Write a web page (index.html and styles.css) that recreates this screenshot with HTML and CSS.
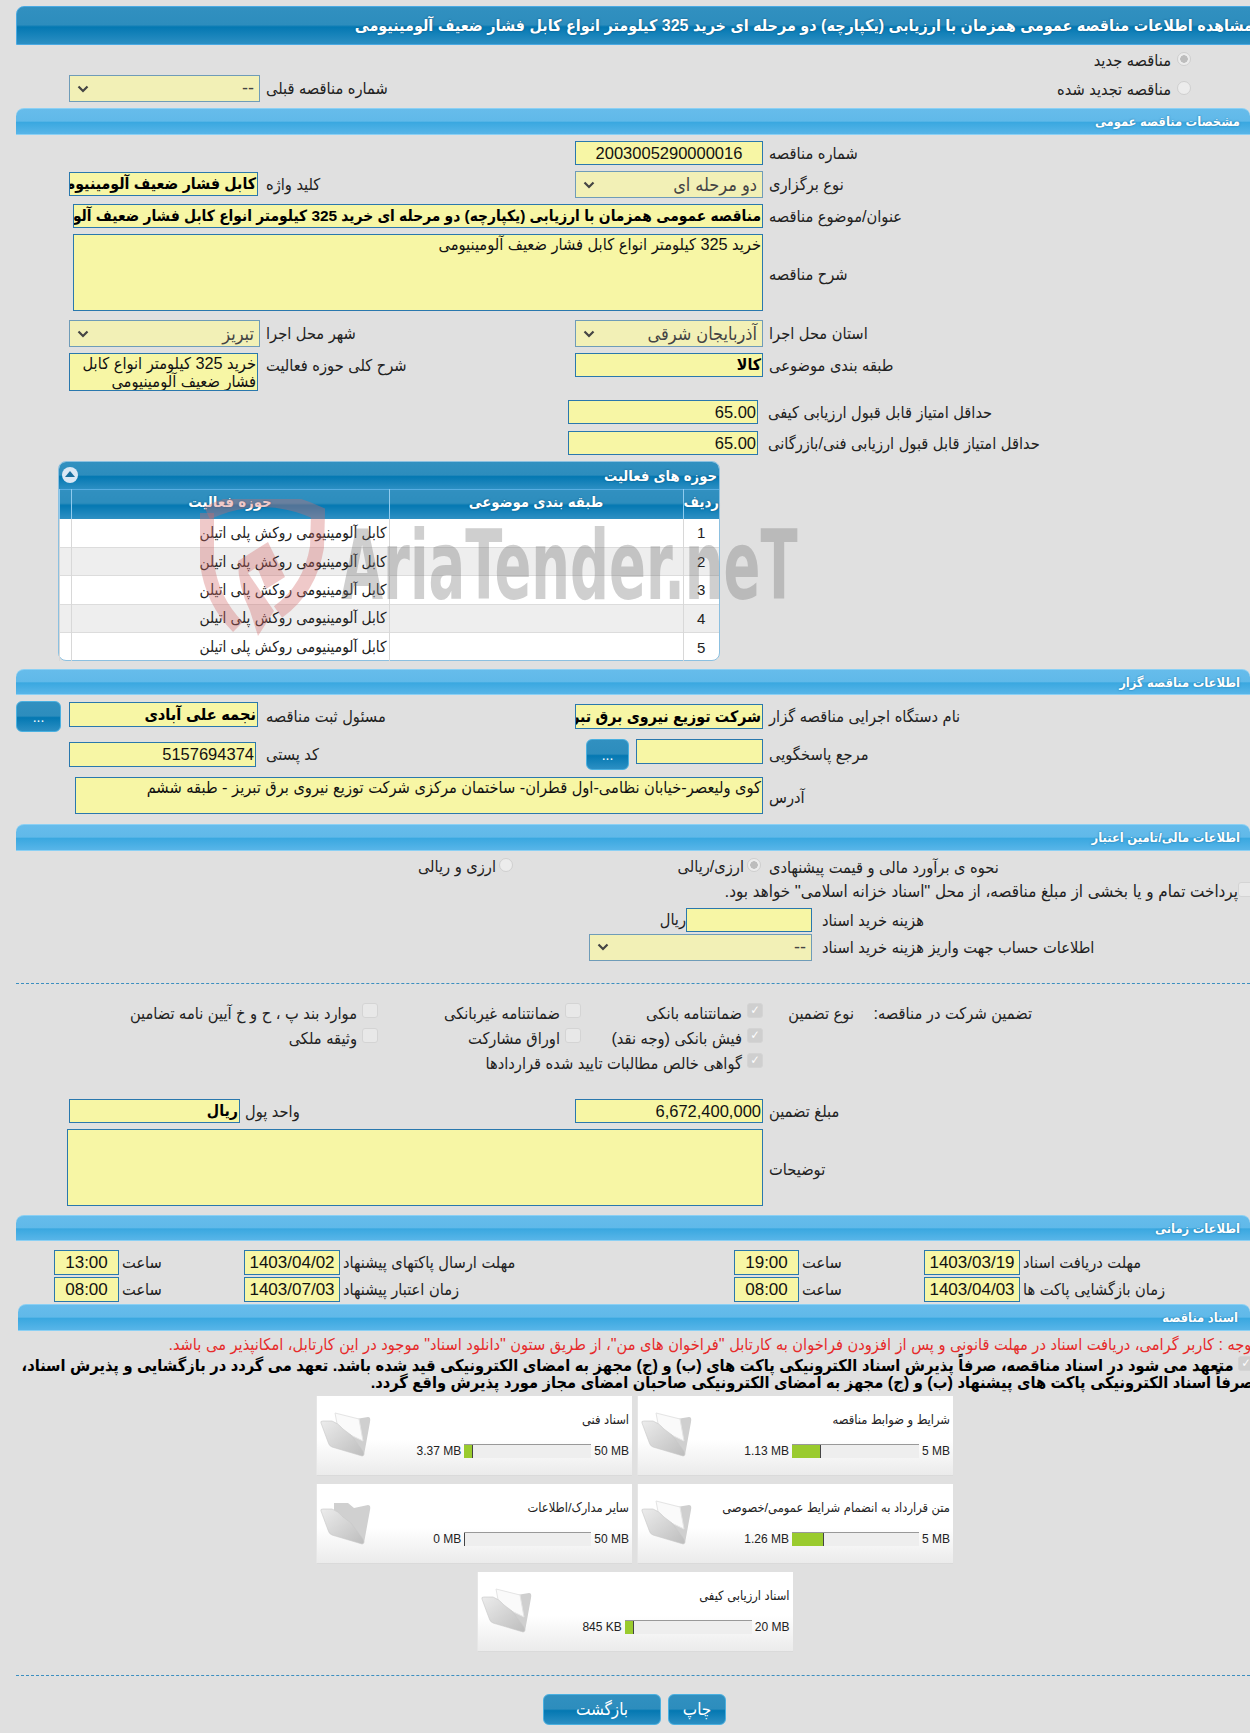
FILE: index.html
```html
<!DOCTYPE html>
<html lang="fa" dir="rtl">
<head>
    <meta charset="UTF-8">
    <title>مشاهده اطلاعات مناقصه</title>
    <link rel="stylesheet" href="styles.css">
</head>
<body>
    <svg class="defs" width="0" height="0">
        <defs>
            <linearGradient id="flap" x1="0" y1="0" x2="1" y2="1">
                <stop offset="0" stop-color="#ececec"/>
                <stop offset="1" stop-color="#bdbdbd"/>
            </linearGradient>
            <symbol id="chevron" viewBox="0 0 12 8">
                <path d="M1.5 1.5 L6 6 L10.5 1.5" fill="none" stroke="#444" stroke-width="2.2"/>
            </symbol>
            <symbol id="folder" viewBox="0 0 56 52">
                <path d="M38 10 L50 8 Q53 8 52 13 L46 46 L30 30 Z" fill="#cfcfcf"/>
                <path d="M17 4 L41 10 L45 32 L20 20 Z" fill="#fafafa" stroke="#e4e4e4"/>
                <path d="M3 14 Q2 12 5 12 L14 12 Q20 14 25 20 L33 26 L45 42 Q47 47 44 47 L14 38 Q11 37 10 33 Z" fill="url(#flap)" stroke="#c8c8c8" stroke-width=".6"/>
            </symbol>
            <symbol id="folder-empty" viewBox="0 0 56 52">
                <path d="M16 6 L30 6 L36 11 L50 8 Q53 8 52 13 L46 46 L30 30 L16 18 Z" fill="#d0d0d0"/>
                <path d="M3 14 Q2 12 5 12 L14 12 Q20 14 25 20 L33 26 L45 42 Q47 47 44 47 L14 38 Q11 37 10 33 Z" fill="url(#flap)" stroke="#c8c8c8" stroke-width=".6"/>
            </symbol>
        </defs>
    </svg>

    <!-- Page title -->
    <h1 class="page-title">مشاهده اطلاعات مناقصه عمومی همزمان با ارزیابی (یکپارچه) دو مرحله ای خرید 325 کیلومتر انواع کابل فشار ضعیف آلومینیومی</h1>

    <div class="form-grid top-grid">
        <div class="radio-line"><span class="radio checked"></span><span>مناقصه جدید</span></div>
        <div class="radio-line second-radio"><span class="radio"></span><span>مناقصه تجدید شده</span></div>
        <div class="lbl col-left-label prev-label">شماره مناقصه قبلی</div>
        <div class="select col-left-field prev-select"><span>--</span><svg class="chevron"><use href="#chevron"/></svg></div>
    </div>

    <!-- General -->
    <h2 class="section-bar">مشخصات مناقصه عمومی</h2>
    <div class="form-grid general-grid">
        <div class="lbl">شماره مناقصه</div>
        <div class="input number-input">2003005290000016</div>
        <div></div><div></div><div></div>

        <div class="lbl select-lbl">نوع برگزاری</div>
        <div class="select"><span>دو مرحله ای</span><svg class="chevron"><use href="#chevron"/></svg></div>
        <div class="lbl keyword-lbl">کلید واژه</div>
        <div class="input strong keyword-input">کابل فشار ضعیف آلومینیومی</div>
        <div></div>

        <div class="lbl">عنوان/موضوع مناقصه</div>
        <div class="input strong title-input">مناقصه عمومی همزمان با ارزیابی (یکپارچه) دو مرحله ای خرید 325 کیلومتر انواع کابل فشار ضعیف آلومینیومی</div>

        <div class="lbl middle">شرح مناقصه</div>
        <div class="input area title-input desc-area">خرید 325 کیلومتر انواع کابل فشار ضعیف آلومینیومی</div>

        <div class="lbl select-lbl">استان محل اجرا</div>
        <div class="select"><span>آذربایجان شرقی</span><svg class="chevron"><use href="#chevron"/></svg></div>
        <div class="lbl select-lbl">شهر محل اجرا</div>
        <div class="select col-left-field"><span>تبریز</span><svg class="chevron"><use href="#chevron"/></svg></div>
        <div></div>

        <div class="lbl">طبقه بندی موضوعی</div>
        <div class="input strong">کالا</div>
        <div class="lbl">شرح کلی حوزه فعالیت</div>
        <div class="input area activity-area">خرید 325 کیلومتر انواع کابل فشار ضعیف آلومینیومی</div>
        <div></div>

        <div class="lbl score-lbl">حداقل امتیاز قابل قبول ارزیابی کیفی</div>
        <div class="input score-input">65.00</div>

        <div class="lbl score-lbl">حداقل امتیاز قابل قبول ارزیابی فنی/بازرگانی</div>
        <div class="input score-input">65.00</div>
    </div>

    <!-- Activity table -->
    <section class="panel">
        <div class="panel-head">
            <span>حوزه های فعالیت</span>
            <span class="panel-toggle"></span>
        </div>
        <table class="panel-table">
            <thead>
                <tr><th class="col-row">ردیف</th><th class="col-cat">طبقه بندی موضوعی</th><th class="col-act">حوزه فعالیت</th><th></th></tr>
            </thead>
            <tbody>
                <tr><td class="num">1</td><td></td><td>کابل آلومینیومی روکش پلی اتیلن</td><td></td></tr>
                <tr><td class="num">2</td><td></td><td>کابل آلومینیومی روکش پلی اتیلن</td><td></td></tr>
                <tr><td class="num">3</td><td></td><td>کابل آلومینیومی روکش پلی اتیلن</td><td></td></tr>
                <tr><td class="num">4</td><td></td><td>کابل آلومینیومی روکش پلی اتیلن</td><td></td></tr>
                <tr><td class="num">5</td><td></td><td>کابل آلومینیومی روکش پلی اتیلن</td><td></td></tr>
            </tbody>
        </table>
        <div class="watermark">
            <svg class="watermark-shield" viewBox="0 0 125 137">
                <path d="M7 14 Q62 -12 118 14 L117 48 Q110 90 78 113" fill="none" stroke="#d46a6a" stroke-opacity=".36" stroke-width="14"/>
                <path d="M7 14 L7 64 Q12 102 38 128" fill="none" stroke="#d46a6a" stroke-opacity=".36" stroke-width="14"/>
                <path d="M38 62 L68 43 L85 78 L66 90 L57 68 L48 74 L74 112 L58 137 L50 112 Q38 88 38 62 Z" fill="#d46a6a" fill-opacity=".36"/>
            </svg>
            <span class="watermark-text">AriaTender.neT</span>
        </div>
    </section>

    <!-- Tender organizer -->
    <h2 class="section-bar organizer-bar">اطلاعات مناقصه گزار</h2>
    <div class="form-grid organizer-grid">
        <div class="lbl pushed">نام دستگاه اجرایی مناقصه گزار</div>
        <div class="input strong pushed">شرکت توزیع نیروی برق تبریز</div>
        <div class="lbl pushed">مسئول ثبت مناقصه</div>
        <div class="input strong pushed keyword-input person-input">نجمه علی آبادی</div>
        <button class="btn dots-btn" type="button">...</button>

        <div class="lbl pushed">مرجع پاسخگویی</div>
        <div class="ref-cell">
            <div class="input ref-input"></div>
            <button class="btn dots-btn" type="button">...</button>
        </div>
        <div class="lbl pushed">کد پستی</div>
        <div class="input number-left pushed postal-input">5157694374</div>
        <div></div>

        <div class="lbl address-lbl">آدرس</div>
        <div class="input area address-area">کوی ولیعصر-خیابان نظامی-اول قطران- ساختمان مرکزی شرکت توزیع نیروی برق تبریز - طبقه ششم</div>
    </div>

    <!-- Finance -->
    <h2 class="section-bar">اطلاعات مالی/تامین اعتبار</h2>
    <div class="finance-line estimate-line">
        <div class="lbl">نحوه ی برآورد مالی و قیمت پیشنهادی</div>
        <div class="options">
            <div class="option"><span class="radio checked"></span><span>ارزی/ریالی</span></div>
            <div class="option"><span class="radio"></span><span>ارزی و ریالی</span></div>
        </div>
    </div>
    <div class="treasury-line"><span class="check"></span><span>پرداخت تمام و یا بخشی از مبلغ مناقصه، از محل "اسناد خزانه اسلامی" خواهد بود.</span></div>
    <div class="cost-line cost-first">
        <div class="lbl cost-lbl">هزینه خرید اسناد</div>
        <div class="input cost-input"></div>
        <span class="cost-unit">ریال</span>
    </div>
    <div class="cost-line cost-second">
        <div class="lbl cost-lbl">اطلاعات حساب جهت واریز هزینه خرید اسناد</div>
        <div class="select account-select"><span>--</span><svg class="chevron"><use href="#chevron"/></svg></div>
    </div>

    <hr class="dashed first-dashed">

    <div class="guarantee-grid">
        <div>تضمین شرکت در مناقصه:</div>
        <div>نوع تضمین</div>
        <label class="check-item"><span class="check on">✓</span>ضمانتنامه بانکی</label>
        <label class="check-item"><span class="check"></span>ضمانتنامه غیربانکی</label>
        <label class="check-item"><span class="check"></span>موارد بند پ ، ح و خ آیین نامه تضامین</label>
        <div></div>
        <div></div>
        <label class="check-item"><span class="check on">✓</span>فیش بانکی (وجه نقد)</label>
        <label class="check-item"><span class="check"></span>اوراق مشارکت</label>
        <label class="check-item"><span class="check"></span>وثیقه ملکی</label>
        <div></div>
        <div></div>
        <label class="check-item wide-item"><span class="check on">✓</span>گواهی خالص مطالبات تایید شده قراردادها</label>
    </div>

    <div class="form-grid amount-grid">
        <div class="lbl">مبلغ تضمین</div>
        <div class="input number-left">6,672,400,000</div>
        <div class="lbl unit-lbl">واحد پول</div>
        <div class="input strong unit-input">ریال</div>
        <div></div>

        <div class="lbl middle">توضیحات</div>
        <div class="input area notes-area"></div>
    </div>

    <!-- Dates -->
    <h2 class="section-bar">اطلاعات زمانی</h2>
    <div class="dates-grid">
        <div class="lbl">مهلت دریافت اسناد</div>
        <div class="input date">1403/03/19</div>
        <div class="lbl">ساعت</div>
        <div class="input date">19:00</div>
        <div class="lbl">مهلت ارسال پاکتهای پیشنهاد</div>
        <div class="input date">1403/04/02</div>
        <div class="lbl">ساعت</div>
        <div class="input date">13:00</div>
        <div></div>

        <div class="lbl">زمان بازگشایی پاکت ها</div>
        <div class="input date">1403/04/03</div>
        <div class="lbl">ساعت</div>
        <div class="input date">08:00</div>
        <div class="lbl">زمان اعتبار پیشنهاد</div>
        <div class="input date">1403/07/03</div>
        <div class="lbl">ساعت</div>
        <div class="input date">08:00</div>
        <div></div>
    </div>

    <!-- Documents -->
    <h2 class="section-bar docs-bar">اسناد مناقصه</h2>
    <p class="notice-red">توجه : کاربر گرامی، دریافت اسناد در مهلت قانونی و پس از افزودن فراخوان به کارتابل "فراخوان های من"، از طریق ستون "دانلود اسناد" موجود در این کارتابل، امکانپذیر می باشد.</p>
    <p class="notice-bold"><span class="check on">✓</span> متعهد می شود در اسناد مناقصه، صرفاً پذیرش اسناد الکترونیکی پاکت های (ب) و (ج) مجهز به امضای الکترونیکی قید شده باشد. تعهد می گردد در بازگشایی و پذیرش اسناد،<br>صرفاً اسناد الکترونیکی پاکت های پیشنهاد (ب) و (ج) مجهز به امضای الکترونیکی صاحبان امضای مجاز مورد پذیرش واقع گردد.</p>

    <div class="doc-cards">
        <div class="doc-card">
            <div class="doc-info">
                <div class="doc-title">شرایط و ضوابط مناقصه</div>
                <div class="doc-usage"><span dir="ltr">5 MB</span><div class="bar"><div class="bar-fill" style="width:23%"></div></div><span dir="ltr">1.13 MB</span></div>
            </div>
            <svg class="folder"><use href="#folder"/></svg>
        </div>
        <div class="doc-card">
            <div class="doc-info">
                <div class="doc-title">اسناد فنی</div>
                <div class="doc-usage"><span dir="ltr">50 MB</span><div class="bar"><div class="bar-fill" style="width:7%"></div></div><span dir="ltr">3.37 MB</span></div>
            </div>
            <svg class="folder"><use href="#folder"/></svg>
        </div>
        <div class="doc-card">
            <div class="doc-info">
                <div class="doc-title">متن قرارداد به انضمام شرایط عمومی/خصوصی</div>
                <div class="doc-usage"><span dir="ltr">5 MB</span><div class="bar"><div class="bar-fill" style="width:25%"></div></div><span dir="ltr">1.26 MB</span></div>
            </div>
            <svg class="folder"><use href="#folder"/></svg>
        </div>
        <div class="doc-card">
            <div class="doc-info">
                <div class="doc-title">سایر مدارک/اطلاعات</div>
                <div class="doc-usage"><span dir="ltr">50 MB</span><div class="bar"><div class="bar-fill" style="width:0"></div></div><span dir="ltr">0 MB</span></div>
            </div>
            <svg class="folder"><use href="#folder-empty"/></svg>
        </div>
        <div class="doc-card">
            <div class="doc-info">
                <div class="doc-title">اسناد ارزیابی کیفی</div>
                <div class="doc-usage"><span dir="ltr">20 MB</span><div class="bar"><div class="bar-fill" style="width:7%"></div></div><span dir="ltr">845 KB</span></div>
            </div>
            <svg class="folder"><use href="#folder"/></svg>
        </div>
    </div>

    <hr class="dashed last-dashed">

    <div class="actions">
        <button class="btn" type="button">چاپ</button>
        <button class="btn back-btn" type="button">بازگشت</button>
    </div>
</body>
</html>
```

FILE: styles.css
```css
/* General */
html {
    overflow-x: hidden;
}

body {
    width: 1250px;
    margin: 0;
    padding-bottom: 8px;
    overflow-x: hidden;
    background-color: #e0e0e0;
    color: #222;
    font-family: "Liberation Sans", "DejaVu Sans Condensed", "DejaVu Sans", sans-serif;
    font-size: 16.3px;
    direction: rtl;
}

.defs {
    position: absolute;
}

/* Bars */
.page-title {
    box-sizing: border-box;
    height: 39px;
    margin: 6px -10px 0 16px;
    padding: 0 6px 0 0;
    border: 1px solid #4aa9e2;
    border-radius: 8px 8px 0 0;
    background: linear-gradient(#3190c0, #2d8dbd 48%, #0478b2 54%, #2c8fc3 100%);
    color: #fff;
    font-size: 16px;
    font-weight: bold;
    line-height: 37px;
    white-space: nowrap;
    text-shadow: 0 0 2px #0a4f78;
}

.section-bar {
    box-sizing: border-box;
    height: 26.5px;
    margin: 0 0 0 16px;
    padding-right: 10px;
    border-top: 1px solid #8bd0f4;
    border-bottom: 1px solid #8bd0f4;
    border-radius: 8px 8px 0 0;
    background: linear-gradient(#66bceb, #60b9e9 48%, #3aa8e0 54%, #58b5e8 100%);
    color: #fff;
    font-size: 12.8px;
    font-weight: bold;
    line-height: 25px;
    text-shadow: 0 0 2px #1c6f9f;
}

.docs-bar {
    margin-left: 18px;
    padding-right: 12px;
}

.organizer-bar {
    margin-top: 8px;
}

/* Form grid: columns run from the right */
.form-grid {
    display: grid;
    grid-template-columns: 487px 188px 315px 191px 69px;
    align-items: start;
}

.top-grid {
    grid-template-rows: 30px 33px;
}

.general-grid {
    margin-top: 6.5px;
    grid-template-rows: 30px 33px 30px 86px 33px 47px 30.5px 30px;
}

.organizer-grid {
    margin-top: 6px;
    grid-template-rows: 38px 38px 47px;
}

.amount-grid {
    margin-top: 23px;
    grid-template-rows: 30px 86px;
}

.lbl {
    padding-left: 6px;
    text-align: left;
    line-height: 24px;
    white-space: nowrap;
}

.select-lbl {
    line-height: 27px;
}

.middle {
    margin-top: 28px;
}

.address-lbl {
    margin-top: 8px;
}

.pushed {
    margin-top: 3px;
    line-height: 25px;
}

.input {
    box-sizing: border-box;
    height: 24px;
    overflow: hidden;
    border: 1px solid #2a78ad;
    background-color: #f7f6a5;
    color: #111;
    font-size: 16.3px;
    line-height: 22px;
    padding: 0 1px;
    white-space: nowrap;
}

.input.pushed {
    height: 25px;
    line-height: 23px;
}

.strong {
    font-weight: bold;
    font-size: 15.8px;
    color: #000;
}

.title-input.strong {
    font-size: 15.4px;
}

.person-input {
    font-size: 16.3px;
}

.number-input {
    font-size: 16.5px;
    text-align: center;
}

.number-left {
    font-size: 16.5px;
}

.select {
    box-sizing: border-box;
    display: flex;
    align-items: center;
    justify-content: space-between;
    height: 27px;
    padding: 0 5px 0 7px;
    border: 1px solid #6f9cb8;
    background-color: #f2f0b6;
    color: #444;
    font-size: 18px;
}

.chevron {
    width: 12px;
    height: 8px;
}

.col-left-field {
    grid-column: 4;
}

.col-left-label {
    grid-column: 3;
    grid-row: 2;
}

.prev-label {
    line-height: 27px;
}

.prev-select {
    grid-row: 2;
}

.radio-line {
    display: flex;
    align-items: center;
    gap: 6px;
    grid-column: 1;
    padding-top: 6px;
    padding-right: 59px;
}

.second-radio {
    grid-row: 2;
    padding-top: 5px;
}

.radio {
    box-sizing: border-box;
    display: inline-block;
    flex: none;
    width: 14px;
    height: 14px;
    margin-bottom: 3px;
    border: 1px solid #cfcfcf;
    border-radius: 50%;
    background-color: #ececec;
}

.radio.checked {
    background: radial-gradient(circle, #bdbdbd 0 3.5px, #ececec 4px);
}

.check {
    box-sizing: border-box;
    display: inline-block;
    flex: none;
    width: 16px;
    height: 15px;
    margin-bottom: 5px;
    border: 1px solid #d4d4d4;
    border-radius: 3px;
    background-color: #e8e8e8;
    color: #fff;
    font-size: 12px;
    font-weight: bold;
    line-height: 13px;
    text-align: center;
}

.check.on {
    background-color: #cfcfcf;
}

/* General section fields */
.keyword-input {
    justify-self: end;
    width: 189px;
    margin-top: 1px;
}

.keyword-lbl {
    margin-top: 1px;
}

.title-input {
    grid-column: 2 / 6;
    justify-self: start;
    width: 690px;
}

.desc-area {
    height: 77px;
}

.area {
    white-space: normal;
    line-height: 19px;
}

.activity-area {
    justify-self: end;
    width: 189px;
    height: 38px;
    line-height: 18px;
}

.score-input {
    grid-column: 2 / 6;
    justify-self: start;
    width: 190px;
    margin-right: 5px;
    font-size: 16.5px;
}

.score-lbl {
    padding-left: 5px;
}

/* Activity panel */
.panel {
    position: relative;
    box-sizing: border-box;
    width: 662px;
    height: 200px;
    margin-right: 530px;
    border: 1px solid #8cc0e0;
    border-radius: 8px;
    background-color: #fff;
}

.panel-head {
    display: flex;
    align-items: center;
    justify-content: space-between;
    height: 27px;
    padding: 0 2px 0 3px;
    border-radius: 7px 7px 0 0;
    background: linear-gradient(#3190c0, #2d8dbd 48%, #0478b2 54%, #2c8fc3 100%);
    color: #fff;
    font-size: 14.7px;
    font-weight: bold;
    text-shadow: 0 0 2px #0a4f78;
}

.panel-toggle {
    position: relative;
    width: 16px;
    height: 16px;
    border-radius: 50%;
    background-color: #dbe8f5;
}

.panel-toggle::after {
    content: "";
    position: absolute;
    top: 4px;
    left: 3px;
    border-right: 5px solid transparent;
    border-bottom: 6px solid #1a6f9f;
    border-left: 5px solid transparent;
}

.panel-table {
    width: 660px;
    table-layout: fixed;
    border-collapse: collapse;
}

.panel-table th {
    box-sizing: border-box;
    height: 30px;
    padding: 0 0 6px;
    border-top: 1px solid #58aee2;
    border-left: 1px solid #8fcbee;
    background: linear-gradient(#3190c0, #2d8dbd 48%, #0478b2 54%, #2c8fc3 100%);
    color: #fff;
    font-size: 14.8px;
    font-weight: bold;
    text-shadow: 0 0 2px #0a4f78;
}

.col-row {
    width: 36px;
}

.col-cat {
    width: 294px;
}

.col-act {
    width: 318px;
}

.panel-table td {
    box-sizing: border-box;
    height: 28.4px;
    padding: 0 2px;
    border-top: 1px solid #dcdcdc;
    border-left: 1px solid #d8d8d8;
    font-size: 15.3px;
    white-space: nowrap;
}

.panel-table tbody tr:first-child td {
    border-top: none;
}

.panel-table tbody tr:nth-child(even) td {
    background-color: #eee;
}

.panel-table .num {
    text-align: center;
    font-size: 15px;
}

.watermark {
    position: absolute;
    top: 37px;
    left: 141px;
    width: 600px;
    height: 140px;
    direction: ltr;
    pointer-events: none;
}

.watermark-shield {
    position: absolute;
    left: 0;
    top: 0;
    width: 125px;
    height: 137px;
}

.watermark-text {
    position: absolute;
    left: 141px;
    top: 19px;
    color: rgba(110, 110, 110, 0.33);
    font-family: "DejaVu Sans Condensed", "DejaVu Sans", sans-serif;
    font-size: 96px;
    font-weight: bold;
    line-height: 96px;
    white-space: nowrap;
    transform: scaleX(0.63);
    transform-origin: left top;
}

/* Organizer section */
.dots-btn {
    justify-self: end;
    width: 45px;
    height: 31px;
}

.organizer-grid > .dots-btn {
    margin-left: 16px;
}

.ref-cell {
    display: flex;
    gap: 7px;
}

.ref-input {
    flex: none;
    width: 127px;
    height: 25px;
}

.ref-cell .dots-btn {
    flex: none;
    width: 43px;
}

.postal-input {
    justify-self: end;
    width: 187px;
}

.address-area {
    grid-column: 2 / 6;
    justify-self: start;
    width: 688px;
    height: 37px;
}

/* Finance section */
.finance-line {
    display: grid;
    grid-template-columns: 487px 1fr;
    align-items: center;
    height: 28px;
    margin-top: 2px;
}

.options {
    display: flex;
    padding-right: 2px;
}

.option {
    display: flex;
    align-items: center;
    gap: 3px;
    width: 248px;
    white-space: nowrap;
}

.treasury-line {
    display: flex;
    align-items: center;
    height: 22px;
    margin-right: -4px;
    font-size: 16.9px;
    white-space: nowrap;
}

.cost-line {
    display: flex;
    align-items: center;
}

.cost-first {
    margin-top: 5px;
}

.cost-second {
    margin-top: 2px;
}

.cost-lbl {
    box-sizing: border-box;
    width: 438px;
    flex: none;
    padding-left: 10px;
}

.cost-input {
    width: 126px;
    flex: none;
}

.account-select {
    width: 223px;
}

.dashed {
    height: 0;
    margin: 0 0 0 16px;
    border: 0;
    border-top: 1px dashed #3b8fc0;
}

.first-dashed {
    margin-top: 22px;
}

.last-dashed {
    margin-top: 23px;
}

/* Guarantee */
.guarantee-grid {
    display: grid;
    grid-template-columns: 178px 91px 182px 203px 1fr;
    grid-auto-rows: 25px;
    align-items: center;
    margin-top: 17px;
    padding-right: 218px;
    white-space: nowrap;
}

.check-item {
    display: flex;
    align-items: center;
    gap: 5px;
}

.wide-item {
    grid-column: 3 / 6;
}

.unit-lbl {
    margin-left: -15px;
    padding-left: 0;
}

.unit-input {
    justify-self: end;
    width: 171px;
}

.notes-area {
    grid-column: 2 / 6;
    justify-self: start;
    width: 696px;
    height: 77px;
}

/* Dates */
.dates-grid {
    display: grid;
    grid-template-columns: 230px 96px 125px 65px 394px 96px 125px 65px 54px;
    grid-template-rows: 27px 27px;
    align-items: start;
    margin-top: 9px;
}

.dates-grid .lbl {
    padding-left: 3px;
    line-height: 25px;
}

.date {
    height: 25px;
    font-size: 17px;
    line-height: 23px;
    text-align: center;
}

/* Documents */
.notice-red {
    margin: 2px -6px 0 0;
    color: #e62b2b;
    font-size: 16.3px;
    line-height: 22px;
    white-space: nowrap;
}

.notice-bold {
    margin: 1px -4px 0 0;
    color: #000;
    font-size: 16.3px;
    font-weight: bold;
    line-height: 17.5px;
    white-space: nowrap;
}

.notice-bold .check {
    margin-bottom: 0;
    vertical-align: text-top;
}

.doc-cards {
    display: flex;
    flex-wrap: wrap;
    justify-content: center;
    gap: 8px 5px;
    width: 637px;
    margin: 4px 297px 0 0;
}

.doc-card {
    box-sizing: border-box;
    display: flex;
    width: 316px;
    height: 80px;
    padding: 14px 3px 0 1px;
    border-bottom: 1px solid #dadada;
    border-left: 1px solid #e6e6e6;
    background: linear-gradient(#fff 55%, #ebebeb);
    font-size: 12px;
}

.doc-info {
    flex: 1;
    min-width: 0;
}

.doc-title {
    height: 20px;
    font-size: 12.8px;
    line-height: 20px;
    white-space: nowrap;
}

.doc-usage {
    display: flex;
    align-items: center;
    gap: 3px;
    margin-top: 14px;
    white-space: nowrap;
}

.bar {
    box-sizing: border-box;
    flex: none;
    width: 127px;
    height: 14px;
    direction: ltr;
    border-top: 1px solid #999;
    background-color: #eee;
}

.bar-fill {
    box-sizing: border-box;
    height: 13px;
    border-right: 1px solid #444;
    background-color: #9acb2e;
}

.folder {
    flex: none;
    width: 56px;
    height: 52px;
    margin-top: -1px;
}

/* Buttons */
.btn {
    box-sizing: border-box;
    height: 31px;
    padding: 0;
    border: 1px solid #4ab0e0;
    border-radius: 6px;
    background: linear-gradient(#3190c0, #2d8dbd 48%, #0478b2 54%, #2c8fc3 100%);
    color: #fff;
    font-family: inherit;
    font-size: 14px;
    cursor: pointer;
}

.actions {
    display: flex;
    gap: 7px;
    margin-top: 18px;
    padding-right: 524px;
}

.actions .btn {
    width: 58px;
    font-size: 17px;
}

.actions .back-btn {
    width: 118px;
}
```
